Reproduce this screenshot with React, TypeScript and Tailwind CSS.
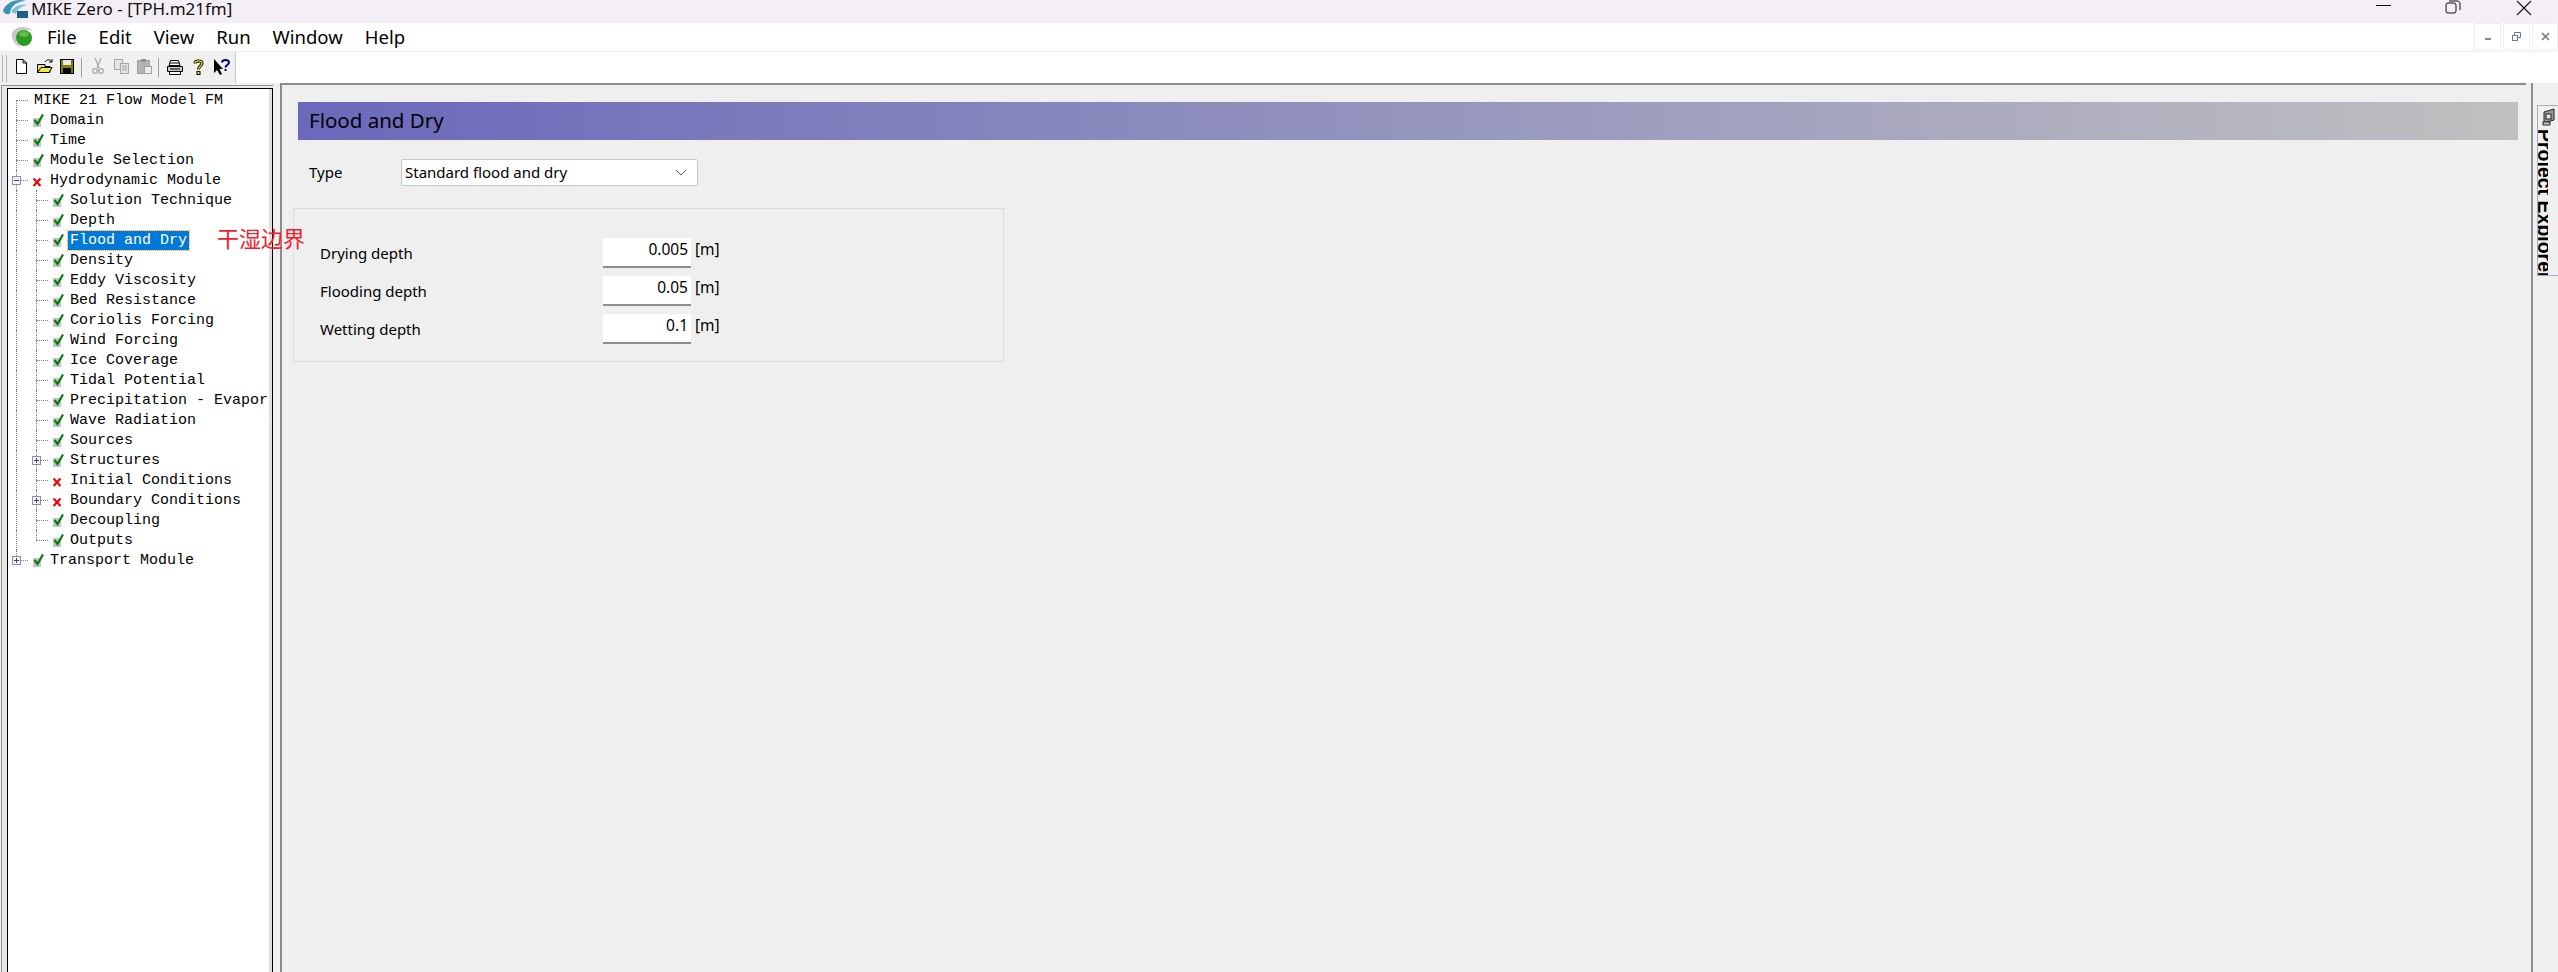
import React from "react";

const ui = { fontFamily: '"Noto Sans", "Open Sans", sans-serif' };
const mono = { fontFamily: '"Liberation Mono", monospace' };

function Check() {
  return (
    <svg width="14" height="15" viewBox="0 0 14 15" className="shrink-0">
      <rect x="0" y="5" width="8" height="9" fill="#c4c4c4" />
      <path d="M1.500 7 L4.500 11 L10 1.500" fill="none" stroke="#067a06" strokeWidth="2.200" />
    </svg>
  );
}

function Cross() {
  return (
    <svg width="14" height="15" viewBox="0 0 14 15" className="shrink-0">
      <path d="M0.500 5.500 L7.500 13 M7.500 5.500 L0.500 13" fill="none" stroke="#f00000" strokeWidth="2.200" />
    </svg>
  );
}

function Expander({ open }: { open?: boolean }) {
  return (
    <svg width="9" height="9" viewBox="0 0 9 9" className="block bg-[#f4f4f8]">
      <rect x="0.5" y="0.5" width="8" height="8" fill="none" stroke="#8a8fa6" />
      <path d={open ? "M2 4.5H7" : "M2 4.5H7M4.5 2V7"} stroke="#40486a" />
    </svg>
  );
}

type Row = { t: string; l: 0 | 1; s?: "ok" | "x" | "none"; e?: "open" | "closed"; sel?: boolean };

const rows: Row[] = [
  { t: "MIKE 21 Flow Model FM", l: 0, s: "none" },
  { t: "Domain", l: 0 },
  { t: "Time", l: 0 },
  { t: "Module Selection", l: 0 },
  { t: "Hydrodynamic Module", l: 0, s: "x", e: "open" },
  { t: "Solution Technique", l: 1 },
  { t: "Depth", l: 1 },
  { t: "Flood and Dry", l: 1, sel: true },
  { t: "Density", l: 1 },
  { t: "Eddy Viscosity", l: 1 },
  { t: "Bed Resistance", l: 1 },
  { t: "Coriolis Forcing", l: 1 },
  { t: "Wind Forcing", l: 1 },
  { t: "Ice Coverage", l: 1 },
  { t: "Tidal Potential", l: 1 },
  { t: "Precipitation - Evapor", l: 1 },
  { t: "Wave Radiation", l: 1 },
  { t: "Sources", l: 1 },
  { t: "Structures", l: 1, e: "closed" },
  { t: "Initial Conditions", l: 1, s: "x" },
  { t: "Boundary Conditions", l: 1, s: "x", e: "closed" },
  { t: "Decoupling", l: 1 },
  { t: "Outputs", l: 1 },
  { t: "Transport Module", l: 0, e: "closed" },
];

function TreeRow({ r, i }: { r: Row; i: number }) {
  const status = r.s ?? "ok";
  const x0 = r.l === 0 ? 8 : 28;
  return (
    <div className="relative flex h-[20px] items-center whitespace-pre">
      {i < rows.length - 1 && (
        <span className={`absolute left-[8px] w-0 border-l border-dotted border-[#808080] ${i === 0 ? "top-[10px] bottom-0" : "top-0 bottom-0"}`} />
      )}
      {i === rows.length - 1 && <span className="absolute left-[8px] top-0 h-[10px] w-0 border-l border-dotted border-[#808080]" />}
      {r.l === 1 && i <= 22 && (
        <span className={`absolute left-[28px] w-0 border-l border-dotted border-[#808080] ${i === 22 ? "top-0 h-[10px]" : "top-0 bottom-0"}`} />
      )}
      <span
        className="absolute top-[10px] w-[12px] border-t border-dotted border-[#808080]"
        style={{ left: x0 }}
      />
      {r.e && (
        <span className="absolute top-[6px] z-10" style={{ left: x0 - 4 }}>
          <Expander open={r.e === "open"} />
        </span>
      )}
      <span className="flex items-center" style={{ marginLeft: r.l === 0 ? 25 : 45 }}>
        {status === "ok" && <Check />}
        {status === "x" && <Cross />}
      </span>
      <span
        className={`h-[19px] text-[15px] leading-[19px] ${
          r.sel
            ? "ml-[1px] bg-[#0078d7] px-[2px] text-white outline-1 outline-dotted outline-[#e0a040]"
            : status === "none"
              ? "ml-[1px] text-black"
              : "ml-[3px] text-black"
        }`}
        style={mono}
      >
        {r.t}
      </span>
    </div>
  );
}

function Toolbar() {
  return (
    <div className="flex h-[32px] w-[236px] items-center border-r border-[#c8c8c8] bg-[#f0f0f0]">
      <div className="ml-[2px] h-[27px] w-[5px] border-x border-[#b0b0b0]" />
      <svg width="224" height="24" viewBox="0 0 224 24" className="ml-[2px]">
        {/* new */}
        <path d="M7.5 3.5H14L17.5 7V17.5H7.5Z" fill="#fff" stroke="#000" />
        <path d="M14 3.5V7H17.5" fill="none" stroke="#000" />
        {/* open */}
        <path d="M28.5 16.5V8.5H36V10.5H41V16.5Z" fill="#e8e060" stroke="#000" />
        <path d="M28.5 16.5L32 11.5H43L40 16.5Z" fill="#f0e840" stroke="#000" />
        <path d="M36 6C38 3 41 3 43 6M43 3V6H40" fill="none" stroke="#000" />
        {/* save */}
        <rect x="51.5" y="3.5" width="13" height="14" fill="#808000" stroke="#000" />
        <rect x="54" y="4" width="8" height="5" fill="#e8e8e8" />
        <rect x="54" y="12" width="8" height="5.5" fill="#000" />
        <rect x="72" y="2" width="1" height="19" fill="#a0a0a0" />
        {/* cut */}
        <path d="M86 2L90 12M92 2L88 12" stroke="#a8a8a8" strokeWidth="1.200" fill="none" />
        <circle cx="86" cy="15" r="2.300" fill="none" stroke="#a8a8a8" strokeWidth="1.200" />
        <circle cx="92" cy="15" r="2.300" fill="none" stroke="#a8a8a8" strokeWidth="1.200" />
        {/* copy */}
        <rect x="105.5" y="3.5" width="8" height="10" fill="#e4e4e4" stroke="#a8a8a8" />
        <rect x="111.5" y="7.5" width="8" height="10" fill="#e4e4e4" stroke="#a8a8a8" />
        <path d="M113 10H118M113 12H118M113 14H118" stroke="#a8a8a8" />
        {/* paste */}
        <rect x="128.5" y="4.5" width="12" height="13" fill="#b4b4b4" stroke="#a0a0a0" />
        <rect x="132" y="3" width="5" height="3" fill="#909090" />
        <rect x="135.5" y="10.5" width="7" height="7" fill="#ececec" stroke="#a0a0a0" />
        <rect x="149" y="2" width="1" height="19" fill="#a0a0a0" />
        {/* print */}
        <path d="M161.5 4.5H169.5L171 9.5H160Z" fill="#fff" stroke="#000" />
        <path d="M158.5 10.5H173.5V15.5H158.5Z" fill="#c8c8c8" stroke="#000" />
        <path d="M160.5 15.5H171.5V18.5H160.5Z" fill="#fff" stroke="#000" />
        <path d="M161 7H170M161 13H171" stroke="#000" />
        {/* help */}
        <path d="M186 7.500C186 4 193 4 193 7.500C193 10 189.500 10 189.500 13.500" fill="none" stroke="#000" strokeWidth="3" />
        <path d="M186 7.500C186 4 193 4 193 7.500C193 10 189.500 10 189.500 13.500" fill="none" stroke="#f0f000" strokeWidth="1.200" />
        <rect x="188" y="15.5" width="3" height="3" fill="#f0f000" stroke="#000" />
        {/* whats this */}
        <path d="M205 3V17L208 14L211 19L213 18L210.500 13H214Z" fill="#000" />
        <path d="M213 6.500C213 3 220 3 220 6.500C220 9 216.500 9 216.500 11.500M216.500 13V15" fill="none" stroke="#000080" strokeWidth="2" />
      </svg>
    </div>
  );
}

function Labelled({ label, value }: { label: string; value: string }) {
  return (
    <div className="flex h-[30px] items-stretch">
      <div className="flex w-[283px] items-center text-[15px] text-black" style={ui}>
        {label}
      </div>
      <div className="w-[88px] border-b-2 border-[#8e8e8e] bg-white pr-[3px] pt-[1px] text-right text-[15.5px] leading-[21px] text-black" style={ui}>
        {value}
      </div>
      <div className="ml-[4px] pt-[1px] text-[15.5px] leading-[21px] text-black" style={ui}>
        [m]
      </div>
    </div>
  );
}

export default function App() {
  return (
    <div className="flex h-[972px] w-[2558px] flex-col overflow-hidden bg-white">
      {/* title bar */}
      <div className="flex h-[23px] shrink-0 items-center overflow-hidden bg-[#f4eff7]">
        <svg width="28" height="23" viewBox="0 0 28 23" className="ml-[2px] shrink-0">
          <path d="M1 11C3 3 14 -2 24 1C16 1 9 5 8 13C7 15 3 15 1 11Z" fill="#3a94b8" />
          <path d="M9 12C12 6 19 3 26 5C20 6 15 9 14 14Z" fill="#7cc0d8" />
          <rect x="15" y="11" width="11" height="7" fill="#1c5e86" />
        </svg>
        <span className="ml-[1px] -translate-y-[3px] text-[17px] leading-[23px] text-[#111]" style={ui}>
          MIKE Zero - [TPH.m21fm]
        </span>
        <div className="flex-1" />
        <div className="h-px w-[15px] -translate-y-[6px] bg-black" />
        <svg width="16" height="14" viewBox="0 0 16 14" className="ml-[54px] -translate-y-[5px]">
          <rect x="1" y="3" width="10" height="10" rx="2" fill="none" stroke="#111" />
          <path d="M4 1H12C14 1 15 2 15 4V10" fill="none" stroke="#111" />
        </svg>
        <svg width="16" height="16" viewBox="0 0 16 16" className="ml-[55px] mr-[26px] -translate-y-[4px]">
          <path d="M1 1L15 15M15 1L1 15" stroke="#111" strokeWidth="1.100" />
        </svg>
      </div>

      {/* menu bar */}
      <div className="flex h-[28px] shrink-0 items-center bg-white" style={ui}>
        <svg width="24" height="24" viewBox="0 0 24 24" className="ml-[11px] shrink-0">
          <path d="M1 8C5 1 16 0 22 6C16 3 8 5 5 12C5 16 6 19 10 23C5 21 0 15 1 8Z" fill="#c8c8c8" />
          <circle cx="13" cy="13" r="8" fill="#2f9a22" />
          <ellipse cx="13" cy="9" rx="5" ry="3" fill="#5cc04a" />
        </svg>
        <div className="ml-[12px] flex gap-[22px] text-[18.5px] text-black">
          <span>File</span>
          <span>Edit</span>
          <span>View</span>
          <span>Run</span>
          <span>Window</span>
          <span>Help</span>
        </div>
        <div className="flex-1" />
        <div className="flex h-[27px] gap-[2px] self-start">
          <div className="flex w-[27px] items-center justify-center rounded-[2px] border border-[#eeeeee]">
            <div className="mt-[4px] h-[2px] w-[6px] bg-[#7a8a9a]" />
          </div>
          <div className="flex w-[27px] items-center justify-center rounded-[2px] border border-[#eeeeee]">
            <svg width="9" height="9" viewBox="0 0 9 9">
              <rect x="0.500" y="3.500" width="5" height="5" fill="none" stroke="#6a7a8a" />
              <path d="M2.500 3V.5H8.500V5.500H6" fill="none" stroke="#6a7a8a" />
            </svg>
          </div>
          <div className="flex w-[26px] items-center justify-center rounded-[2px] border border-[#eeeeee]">
            <svg width="9" height="9" viewBox="0 0 9 9">
              <path d="M1 1L8 8M8 1L1 8" stroke="#6a7a8a" strokeWidth="1.600" />
            </svg>
          </div>
        </div>
      </div>

      {/* toolbar */}
      <div className="flex h-[32px] shrink-0 border-t border-[#f0f0f0] bg-white">
        <Toolbar />
      </div>

      {/* body */}
      <div className="relative flex min-h-0 flex-1 bg-[#f0f0f0]">
        {/* tree pane */}
        <div className="flex w-[280px] shrink-0 flex-col pl-[1px] pr-[7px] pt-[2px]">
          <div className="flex min-h-0 flex-1 flex-col border-l border-t border-[#909090] bg-[#e8e8e8] pl-[5px] pt-[2px]">
            <div className="min-h-0 flex-1 border-x border-t border-black bg-white pt-[1px] shadow-[inset_-3px_0_0_#e0e0e0]">
              {rows.map((r, i) => (
                <TreeRow key={r.t} r={r} i={i} />
              ))}
            </div>
          </div>
        </div>

        {/* main */}
        <div className="w-[2246px] shrink-0 border-l-2 border-t-2 border-[#8c8c8c] bg-[#efefef] pl-[16px] pr-[8px] pt-[17px]" style={ui}>
          <div className="flex h-[38px] items-center bg-[linear-gradient(to_right,#6a68bb,#c0c0c0)] pb-[2px] pl-[11px] text-[20.5px] text-black">
            Flood and Dry
          </div>
          <div className="mt-[19px] flex h-[27px] items-center pl-[11px]">
            <span className="w-[92px] text-[15px] text-black">Type</span>
            <div className="flex h-[27px] w-[297px] items-center justify-between rounded-[2px] border border-[#c8c8c8] bg-white pl-[3px] pr-[6px] text-[15px] text-black">
              <span>Standard flood and dry</span>
              <svg width="12" height="7" viewBox="0 0 12 7" className="mr-[4px]">
                <path d="M1 1L6 6L11 1" fill="none" stroke="#606060" />
              </svg>
            </div>
          </div>
          <div className="-ml-[5px] mt-[22px] h-[154px] w-[711px] border border-[#dcdcdc] pl-[26px] pt-[29px]">
            <div className="flex flex-col gap-[8px]">
              <Labelled label="Drying depth" value="0.005" />
              <Labelled label="Flooding depth" value="0.05" />
              <Labelled label="Wetting depth" value="0.1" />
            </div>
          </div>
        </div>

        {/* right docked tab */}
        <div className="ml-[5px] flex-1 border-l-2 border-[#8c8c8c] pl-[4px] pt-[22px]">
          <div className="h-[171px] w-[30px] overflow-hidden border-y border-l border-[#9fb0c4]">
            <svg width="16" height="18" viewBox="0 0 16 18" className="ml-[3px] mt-[2px]">
              <path d="M3 4L13 1V12L3 15Z" fill="#9a9a9a" stroke="#222" />
              <rect x="5" y="6" width="5" height="5" fill="#e4e4e4" stroke="#222" />
              <path d="M2 14H9V17H2Z" fill="#c8c8c8" stroke="#222" />
            </svg>
            <div className="mt-[3px] h-[150px] w-[10px] overflow-hidden">
              <div
                className="h-[170px] whitespace-nowrap text-[19.5px] font-bold leading-[14px] text-black [writing-mode:vertical-rl]"
                style={{ fontFamily: '"Liberation Sans", sans-serif' }}
              >
                Project Explorer
              </div>
            </div>
          </div>
        </div>

        {/* annotation */}
        <span
          className="absolute left-[217px] top-[141px] text-[22px] leading-[26px] text-[#f0202c]"
          style={{ fontFamily: '"Noto Sans CJK SC", sans-serif' }}
        >
          干湿边界
        </span>
      </div>
    </div>
  );
}
